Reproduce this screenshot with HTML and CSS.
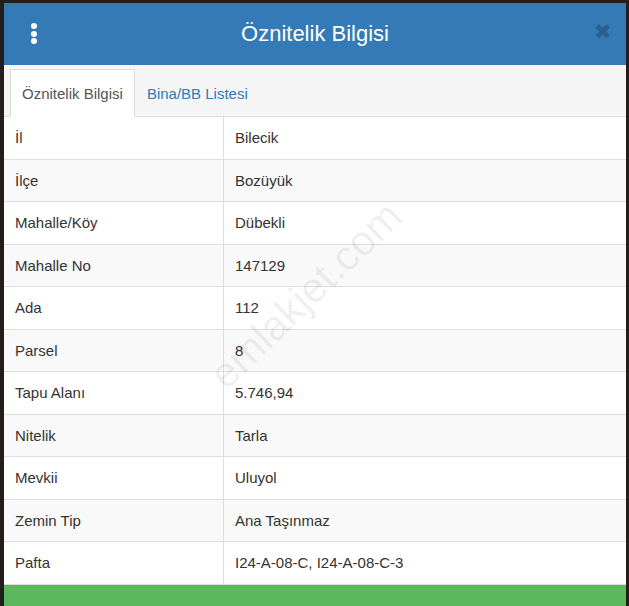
FILE: index.html
```html
<!DOCTYPE html>
<html>
<head>
<meta charset="utf-8">
<link rel="stylesheet" href="styles.css">
</head>
<body>
  <div class="panel">
    <div class="panel-header">
      <span class="menu-dots"><i></i><i></i><i></i></span>
      <h1 class="panel-title">Öznitelik Bilgisi</h1>
      <span class="close-btn">&#10006;</span>
    </div>
    <div class="tab-bar">
      <div class="tab active">Öznitelik Bilgisi</div>
      <div class="tab">Bina/BB Listesi</div>
    </div>
    <table class="info-table">
      <tr><td>İl</td><td>Bilecik</td></tr>
      <tr><td>İlçe</td><td>Bozüyük</td></tr>
      <tr><td>Mahalle/Köy</td><td>Dübekli</td></tr>
      <tr><td>Mahalle No</td><td>147129</td></tr>
      <tr><td>Ada</td><td>112</td></tr>
      <tr><td>Parsel</td><td>8</td></tr>
      <tr><td>Tapu Alanı</td><td>5.746,94</td></tr>
      <tr><td>Nitelik</td><td>Tarla</td></tr>
      <tr><td>Mevkii</td><td>Uluyol</td></tr>
      <tr><td>Zemin Tip</td><td>Ana Taşınmaz</td></tr>
      <tr><td>Pafta</td><td>I24-A-08-C, I24-A-08-C-3</td></tr>
    </table>
    <div class="panel-footer"></div>
    <div class="watermark">emlakjet.com</div>
  </div>
</body>
</html>
```

FILE: styles.css
```css
body {
  background-color: #231d1c;
  font-family: "Liberation Sans", Arial, sans-serif;
  height: 606px;
  margin: 0;
  overflow: hidden;
  padding: 3px 3px 0 4px;
  box-sizing: border-box;
}
.panel {
  background-color: #fff;
  display: flex;
  flex-flow: column;
  height: 603px;
  overflow: hidden;
  position: relative;
}
.panel-header {
  align-items: center;
  background-color: #337ab7;
  display: flex;
  height: 62px;
  justify-content: center;
  position: relative;
}
.panel-title {
  color: #fff;
  font-size: 22px;
  font-weight: normal;
  margin: 0;
}
.menu-dots {
  display: flex;
  flex-flow: column;
  gap: 1.5px;
  left: 27px;
  position: absolute;
  top: 20px;
}
.menu-dots i {
  background-color: #fff;
  border-radius: 50%;
  display: block;
  height: 6px;
  width: 6px;
}
.close-btn {
  color: #2a5f8f;
  font-size: 21px;
  position: absolute;
  right: 14px;
  top: 17px;
}
.tab-bar {
  align-items: flex-end;
  background-color: #f5f5f5;
  border-bottom: 1px solid #ddd;
  display: flex;
  height: 51px;
  padding-left: 6px;
}
.tab {
  color: #337ab7;
  font-size: 15px;
  line-height: 20px;
  margin-bottom: -1px;
  padding: 15px 12px 13px 12px;
}
.tab.active {
  background-color: #fff;
  border: 1px solid #ddd;
  border-bottom-color: #fff;
  color: #555;
  padding: 14px 11px 12px 11px;
}
.info-table {
  border-collapse: collapse;
  color: #333;
  font-size: 15px;
  width: 100%;
}
.info-table td {
  border-bottom: 1px solid #ddd;
  height: 21.55px;
  line-height: 21.55px;
  padding: 10px 11px;
}
.info-table td:first-child {
  border-right: 1px solid #ddd;
  width: 197px;
}
.info-table tr:nth-child(even) td {
  background-color: #f9f9f9;
}
.panel-footer {
  background-color: #5cb85c;
  flex: 1;
}
.watermark {
  color: rgba(0, 0, 0, 0.07);
  font-size: 42px;
  left: 178px;
  position: absolute;
  top: 268px;
  transform: rotate(-44deg);
}
```
